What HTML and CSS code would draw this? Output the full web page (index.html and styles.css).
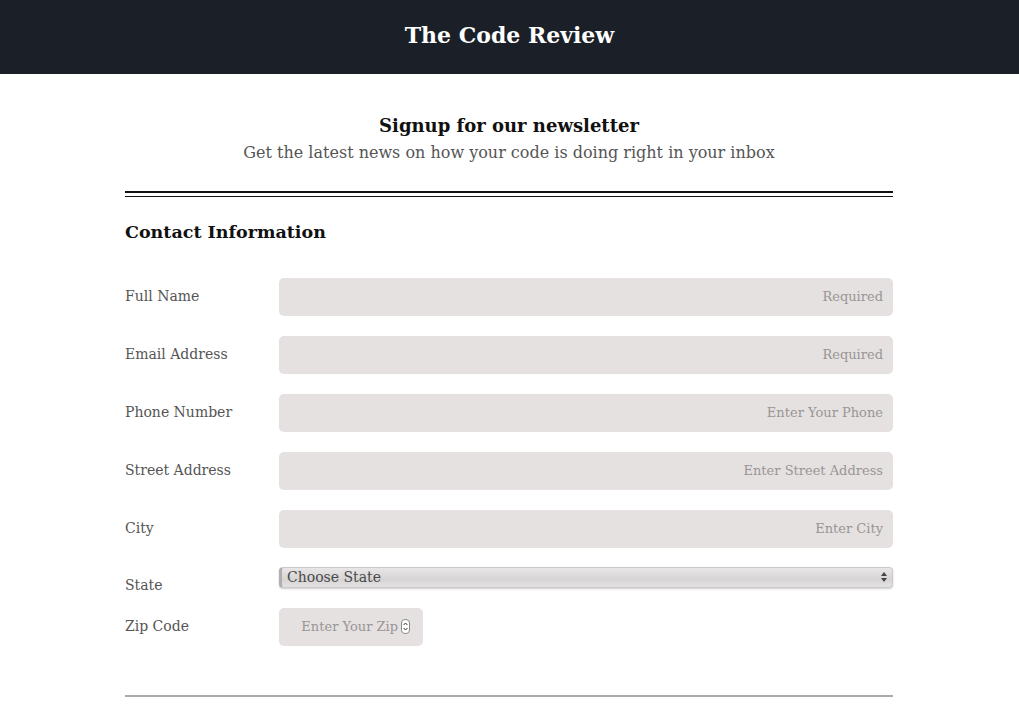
FILE: index.html
```html
<!DOCTYPE html>
<html lang="en">
<head>
<meta charset="utf-8">
<title>The Code Review</title>
<link rel="stylesheet" href="styles.css">
</head>
<body>
<header class="site-header">
  <h1 class="site-title">The Code Review</h1>
</header>
<main class="page">
  <section class="intro">
    <h2 class="intro-title">Signup for our newsletter</h2>
    <p class="intro-sub">Get the latest news on how your code is doing right in your inbox</p>
  </section>
  <div class="double-rule"></div>
  <form class="form">
    <h3 class="section-title">Contact Information</h3>
    <div class="rows">
      <label class="row"><span class="label">Full Name</span><input class="field" type="text" placeholder="Required"></label>
      <label class="row"><span class="label">Email Address</span><input class="field" type="text" placeholder="Required"></label>
      <label class="row"><span class="label">Phone Number</span><input class="field" type="text" placeholder="Enter Your Phone"></label>
      <label class="row"><span class="label">Street Address</span><input class="field" type="text" placeholder="Enter Street Address"></label>
      <label class="row"><span class="label">City</span><input class="field" type="text" placeholder="Enter City"></label>
      <div class="row row-select"><span class="label label-state">State</span>
        <div class="select" role="combobox" aria-label="State">
          <span class="select-text">Choose State</span>
          <svg class="select-arrows" width="8" height="12" viewBox="0 0 8 12"><path d="M4 1 L7 5 L1 5 Z M1 7 L7 7 L4 11 Z" fill="#444"/></svg>
        </div>
      </div>
      <label class="row row-zip"><span class="label">Zip Code</span>
        <span class="zip-wrap">
          <input class="field zip" type="text" placeholder="Enter Your Zip">
          <span class="spinner"><svg width="9" height="15" viewBox="0 0 9 15"><rect x="0.5" y="0.5" width="8" height="14" rx="3.5" fill="#fff" stroke="#8a8a8a"/><path d="M2.6 6 L4.5 4 L6.4 6 M2.6 9 L4.5 11 L6.4 9" fill="none" stroke="#333" stroke-width="1"/></svg></span>
        </span>
      </label>
    </div>
  </form>
  <div class="bottom-rule"></div>
</main>
</body>
</html>
```

FILE: styles.css
```css
* { box-sizing: border-box; }
body {
  margin: 0;
  font-family: "DejaVu Serif", "Liberation Serif", serif;
  background: #fff;
  color: #111;
}
.site-header {
  background: #1b1f27;
  height: 74px;
  display: flex;
  align-items: center;
  justify-content: center;
  padding-bottom: 4px;
}
.site-title {
  margin: 0;
  color: #fff;
  font-size: 22px;
  font-weight: bold;
}
.page {
  width: 768px;
  margin-left: calc((100% - 769px) / 2);
}
.intro {
  text-align: center;
  padding-top: 39px;
}
.intro-title {
  margin: 0;
  font-size: 18px;
  line-height: 26px;
  font-weight: bold;
  color: #111;
}
.intro-sub {
  margin: 2px 0 0;
  font-size: 16px;
  line-height: 24px;
  color: #555;
}
.double-rule {
  margin-top: 26px;
  height: 6px;
  border-top: 2px solid #111;
  border-bottom: 1px solid #111;
}
.section-title {
  margin: 21px 0 0;
  font-size: 17.5px;
  line-height: 28px;
  font-weight: bold;
  color: #111;
}
.rows {
  margin-top: 32px;
  display: flex;
  flex-direction: column;
  gap: 20px;
}
.row {
  display: flex;
  align-items: center;
}
.label {
  width: 154px;
  flex: none;
  font-size: 14px;
  color: #555;
  padding-bottom: 3px;
}
.field {
  flex: 1;
  height: 38px;
  border: none;
  border-radius: 5px;
  background: #e5e1e1;
  font-family: "DejaVu Serif", "Liberation Serif", serif;
  font-size: 13px;
  color: #333;
  text-align: right;
  padding: 0 10px 2px;
  outline: none;
}
.field::placeholder { color: #999595; }
.row-select {
  align-items: flex-start;
  margin-top: -1px;
}
.label-state {
  padding-top: 8px;
  padding-bottom: 0;
  margin-bottom: -8px;
  line-height: 21px;
}
.select {
  flex: 1;
  height: 21px;
  display: flex;
  align-items: center;
  justify-content: space-between;
  border: 1px solid #cbc9c9;
  border-left: 3px solid #b0aeae;
  border-radius: 4px;
  background: linear-gradient(#e8e6e6, #d6d4d4 60%, #e4e2e2);
  box-shadow: 0 1px 2px rgba(0,0,0,0.2);
  font-size: 14px;
  color: #4a4a4a;
  padding: 0 4px 1px 5px;
}
.select-text { line-height: 18px; }
.select-arrows { flex: none; }
.zip-wrap {
  position: relative;
  display: flex;
}
.zip {
  flex: none;
  width: 144px;
  padding-right: 25px;
}
.spinner {
  position: absolute;
  right: 13px;
  top: 11px;
  display: flex;
}
.bottom-rule {
  margin-top: 49px;
  height: 2px;
  background: #aaa;
}
```
